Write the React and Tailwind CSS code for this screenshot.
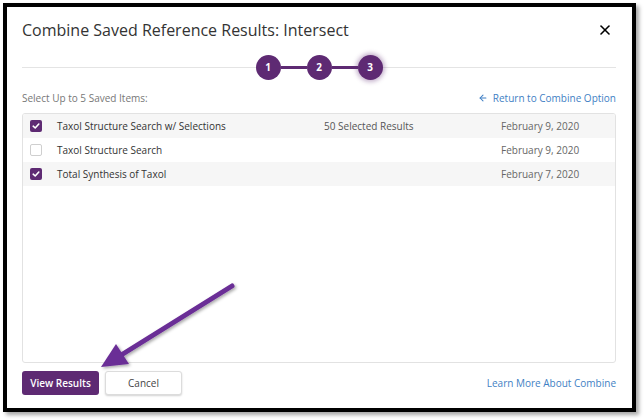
import { X, ArrowLeft } from 'lucide-react';

const rows = [
  { name: 'Taxol Structure Search w/ Selections', count: '50 Selected Results', date: 'February 9, 2020', checked: true },
  { name: 'Taxol Structure Search', count: '', date: 'February 9, 2020', checked: false },
  { name: 'Total Synthesis of Taxol', count: '', date: 'February 7, 2020', checked: true },
];

function Checkbox({ checked }) {
  if (!checked) {
    return <span className="block w-[12px] h-[12px] rounded-[2px] border border-[#cfcfcf] bg-white"></span>;
  }
  return (
    <span className="flex items-center justify-center w-[12px] h-[12px] rounded-[2px] bg-[#5e2a73]">
      <svg width="8" height="8" viewBox="0 0 8 8">
        <path d="M1.2 4.2 L3.2 6 L6.8 2" fill="none" stroke="white" strokeWidth="1.6" strokeLinecap="round" strokeLinejoin="round" />
      </svg>
    </span>
  );
}

function Step({ n, active }) {
  return (
    <span
      className={`flex items-center justify-center w-[25px] h-[25px] rounded-full bg-[#5e2a73] text-white text-[10px] font-bold ${
        active ? 'shadow-[0_0_4px_2px_rgba(94,42,115,0.35)]' : ''
      }`}
    >
      {n}
    </span>
  );
}

export default function App() {
  return (
    <div className="relative w-[644px] h-[420px] bg-white pt-[3px] pl-[3px]" style={{ fontFamily: '"Open Sans", "Liberation Sans", sans-serif' }}>
      <div className="w-[633px] h-[409px] border-4 border-black bg-white shadow-[3px_3px_4px_rgba(0,0,0,0.35)] flex flex-col pl-[15px] pr-[16px] pt-[12px]">
        {/* header */}
        <div className="flex items-center justify-between h-[22px]">
          <h1 className="text-[16px] leading-[22px] text-[#333]">Combine Saved Reference Results: Intersect</h1>
          <X size={16} strokeWidth={2.4} className="text-black mr-[3px]" />
        </div>

        {/* stepper */}
        <div className="relative mt-[14px] h-[25px] flex items-center justify-center">
          <div className="absolute left-0 right-0 top-[12px] h-px bg-[#e4e4e4]"></div>
          <div className="relative flex items-center">
            <Step n="1" />
            <span className="w-[26px] h-[3px] bg-[#5e2a73]"></span>
            <Step n="2" />
            <span className="w-[26px] h-[3px] bg-[#5e2a73]"></span>
            <Step n="3" active />
          </div>
        </div>

        <div className="mt-[11px] h-[14px] flex items-center justify-between text-[10px]">
          <span className="text-[#777]">Select Up to 5 Saved Items:</span>
          <span className="flex items-center gap-[5px] text-[#3f7fc4]">
            <ArrowLeft size={10} strokeWidth={2.5} />
            Return to Combine Option
          </span>
        </div>

        {/* list */}
        <div className="mt-[8px] h-[250px] border border-[#e2e2e2] rounded-[3px] overflow-hidden">
          {rows.map((r, i) => (
            <div key={i} className={`flex items-center h-[24px] text-[10px] ${i % 2 === 0 ? 'bg-[#f6f6f6]' : 'bg-white'}`}>
              <span className="w-[34px] pl-[7px]"><Checkbox checked={r.checked} /></span>
              <span className="w-[267px] text-[#333]">{r.name}</span>
              <span className="w-[177px] text-[#555]">{r.count}</span>
              <span className="text-[#666]">{r.date}</span>
            </div>
          ))}
        </div>

        {/* footer */}
        <div className="mt-[8px] h-[24px] flex items-center justify-between">
          <div className="flex gap-[6px]">
            <button className="w-[77px] h-[24px] rounded-[3px] bg-[#5e2a73] text-white text-[10px] font-semibold">View Results</button>
            <button className="w-[77px] h-[24px] rounded-[3px] bg-white border border-[#dcdcdc] shadow-[0_1px_2px_rgba(0,0,0,0.18)] text-[#444] text-[10px]">Cancel</button>
          </div>
          <span className="text-[10px] text-[#3f7fc4]">Learn More About Combine</span>
        </div>
      </div>

      {/* annotation arrow */}
      <svg className="absolute left-0 top-0 pointer-events-none" width="644" height="420" viewBox="0 0 644 420">
        <defs>
          <filter id="sh" x="-20%" y="-20%" width="140%" height="140%">
            <feDropShadow dx="1.5" dy="1.5" stdDeviation="1.5" floodColor="#000" floodOpacity="0.35" />
          </filter>
        </defs>
        <g filter="url(#sh)">
          <line x1="232" y1="286" x2="118" y2="357" stroke="#6a2d96" strokeWidth="5" strokeLinecap="round" />
          <polygon points="101,367 116,344 129,364" fill="#6a2d96" />
        </g>
      </svg>
    </div>
  );
}
